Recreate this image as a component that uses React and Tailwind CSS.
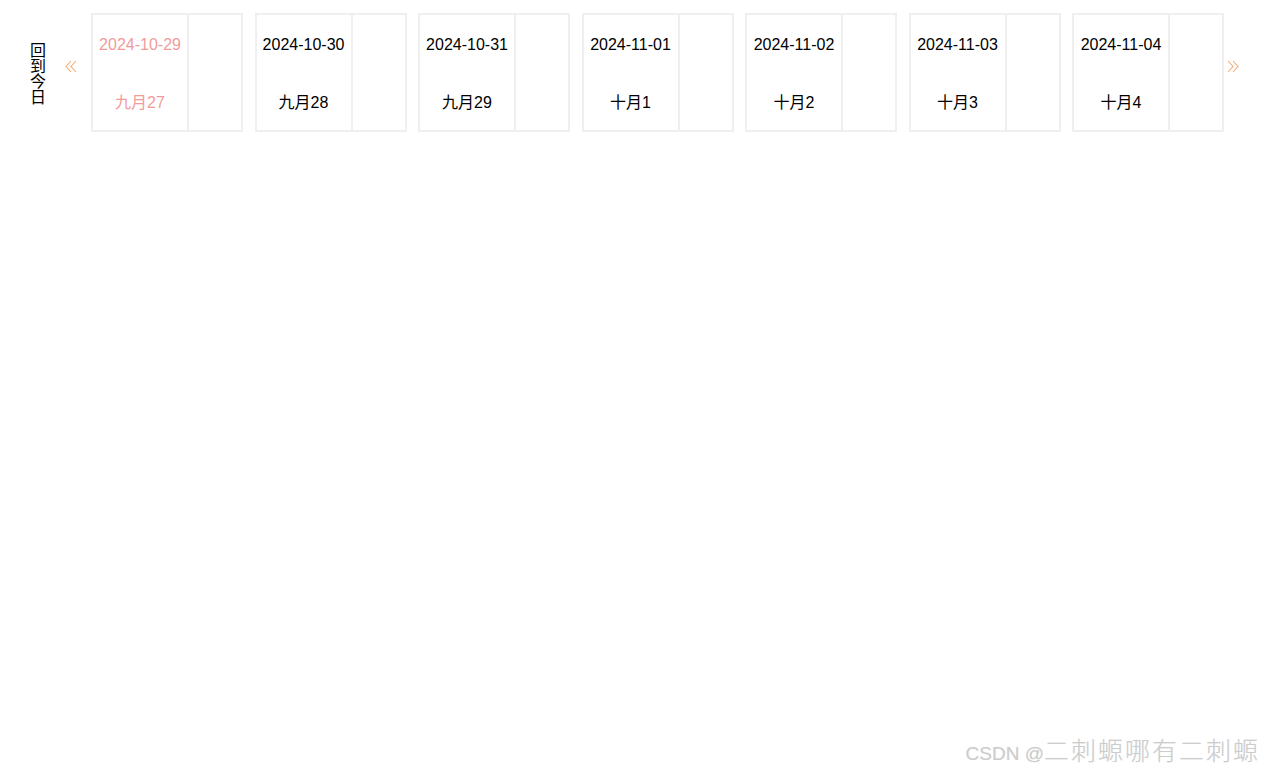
const days = [
  { date: "2024-10-29", lunar: "九月27", today: true },
  { date: "2024-10-30", lunar: "九月28" },
  { date: "2024-10-31", lunar: "九月29" },
  { date: "2024-11-01", lunar: "十月1" },
  { date: "2024-11-02", lunar: "十月2" },
  { date: "2024-11-03", lunar: "十月3" },
  { date: "2024-11-04", lunar: "十月4" },
];

function Chevrons({ dir }) {
  const d =
    dir === "left"
      ? "M6 1 L1 6.5 L6 12 M11 1 L6 6.5 L11 12"
      : "M1 1 L6 6.5 L1 12 M6 1 L11 6.5 L6 12";
  return (
    <svg width="12" height="13" viewBox="0 0 12 13" fill="none" stroke="#f5a970" strokeWidth="1.1">
      <path d={d} />
    </svg>
  );
}

function DayCard({ day }) {
  const color = day.today ? "text-[#f09c9c]" : "text-black";
  return (
    <div className="flex h-[119px] w-[152px] shrink-0 border-2 border-[#efefef]">
      <div className={`flex w-[96px] flex-col items-center border-r-2 border-[#efefef] pt-[20px] ${color}`}>
        <div className="leading-5">{day.date}</div>
        <div className="mt-[38px] leading-5">{day.lunar}</div>
      </div>
      <div className="flex-1" />
    </div>
  );
}

export default function App() {
  return (
    <div
      className="relative h-[775px] w-full bg-white text-[16px]"
      style={{ fontFamily: '"Liberation Sans", Arial, "Noto Sans CJK SC", sans-serif' }}
    >
      <div className="flex items-center pt-[13px]">
        <div className="ml-[30px] w-4 break-all pt-[3px] leading-[15.5px] text-black">回到今日</div>
        <div className="ml-[19px] mr-[14px] -mt-[13px] flex">
          <Chevrons dir="left" />
        </div>
        <div className="flex gap-[11.5px]">
          {days.map((d) => (
            <DayCard key={d.date} day={d} />
          ))}
        </div>
        <div className="ml-[3px] -mt-[13px] flex">
          <Chevrons dir="right" />
        </div>
      </div>

      {/* watermark */}
      <div className="absolute bottom-[7px] right-[1px] flex items-baseline font-light leading-7 text-[#cdcdcd] [text-shadow:0_0_1px_#e6e6e6]">
        <span className="text-[19px]">CSDN @</span>
        <span className="text-[25px] tracking-[2px]">二刺螈哪有二刺螈</span>
      </div>
    </div>
  );
}
